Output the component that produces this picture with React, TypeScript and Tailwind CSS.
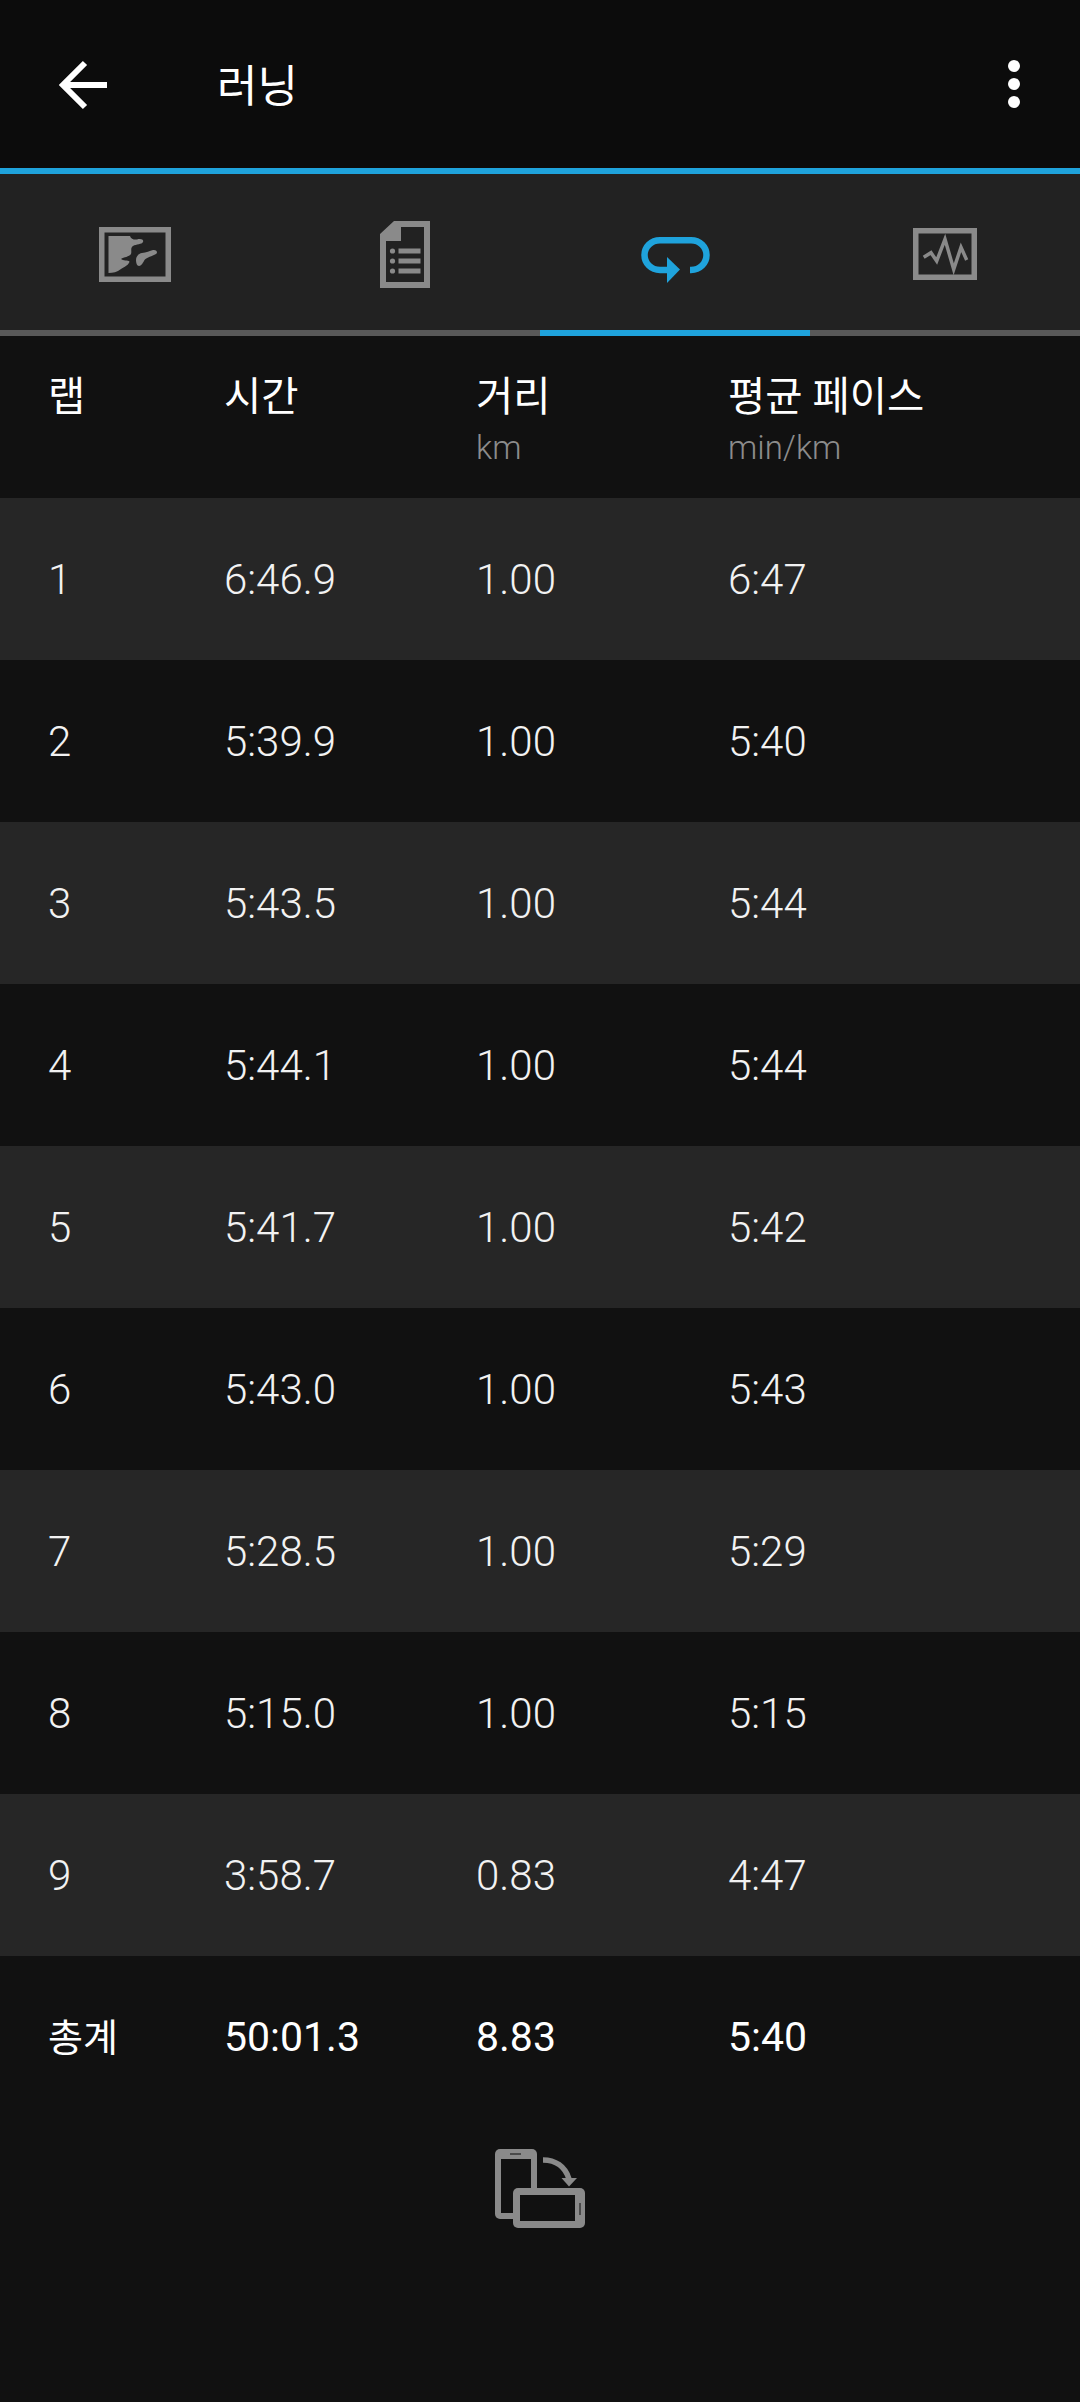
import React from "react";

const laps = [
  ["1", "6:46.9", "1.00", "6:47"],
  ["2", "5:39.9", "1.00", "5:40"],
  ["3", "5:43.5", "1.00", "5:44"],
  ["4", "5:44.1", "1.00", "5:44"],
  ["5", "5:41.7", "1.00", "5:42"],
  ["6", "5:43.0", "1.00", "5:43"],
  ["7", "5:28.5", "1.00", "5:29"],
  ["8", "5:15.0", "1.00", "5:15"],
  ["9", "3:58.7", "0.83", "4:47"],
];

const cols = "grid grid-cols-[176px_252px_252px_1fr] pl-12";

const MapIcon = () => (
  <svg width="72" height="55" viewBox="0 0 72 55" fill="none">
    <rect x="2.75" y="2.75" width="66.5" height="49.5" stroke="#8a8a8a" strokeWidth="5.5" />
    <path
      d="M9.5 9H31C32 12 35 13 38 12.5C42 11.5 45 12.5 44 15C43 17.5 37 17 34 19C31 21 33 24 32 27C30 30 25 30 22 32C24 34 29 33 30.5 34.5C30 38 25 40 22 42C18 45 14 46 9.5 46Z"
      fill="#8a8a8a"
    />
    <path
      d="M37 33C37 29 40 26.5 43 26C47 25.5 51 24 54 23C58 22.5 59 25.5 57 27C53 29.5 48 30 45.5 33C44 35.5 43 38.5 40 39C38 39 37 36 37 33Z"
      fill="#8a8a8a"
    />
  </svg>
);

const DetailsIcon = () => (
  <svg width="50" height="67" viewBox="0 0 50 67" fill="none">
    <path
      fillRule="evenodd"
      clipRule="evenodd"
      d="M14 0H50V67H0V13ZM21 6V20H6V61H44V6Z"
      fill="#8a8a8a"
    />
    <circle cx="12.5" cy="30" r="2.6" fill="#8a8a8a" />
    <circle cx="12.5" cy="40" r="2.6" fill="#8a8a8a" />
    <circle cx="12.5" cy="50" r="2.6" fill="#8a8a8a" />
    <rect x="18.5" y="27.5" width="22" height="5" fill="#8a8a8a" />
    <rect x="18.5" y="37.5" width="22" height="5" fill="#8a8a8a" />
    <rect x="18.5" y="47.5" width="22" height="5" fill="#8a8a8a" />
  </svg>
);

const LapIcon = () => (
  <svg width="69" height="46" viewBox="0 0 69 46" fill="none">
    <path
      d="M49 33H50C59 33 65.5 26 65.5 18C65.5 10 59 3.25 50 3.25H19C10 3.25 3.5 10 3.5 18C3.5 26 10 33 19 33H28"
      stroke="#1fa3dc"
      strokeWidth="6.5"
    />
    <path d="M26 20L39 32.5L26 46Z" fill="#1fa3dc" />
  </svg>
);

const ChartIcon = () => (
  <svg width="64" height="52" viewBox="0 0 64 52" fill="none">
    <rect x="2.75" y="2.75" width="58.5" height="46.5" stroke="#8a8a8a" strokeWidth="5.5" />
    <path
      d="M10.7 29.3L18 24.7L23.7 33L32 11.3L40.7 41.3L48 19.3L53.7 32"
      stroke="#8a8a8a"
      strokeWidth="3.5"
    />
  </svg>
);

const RotateIcon = () => (
  <svg width="90" height="79" viewBox="0 0 90 79" fill="none">
    <rect x="0" y="0" width="42" height="70" rx="5" fill="#8a8a8a" />
    <rect x="6" y="10" width="30" height="54" fill="#111111" />
    <path d="M15 5H26" stroke="#4a4a4a" strokeWidth="2" />
    <rect x="18" y="39" width="72" height="40" rx="5" fill="#8a8a8a" />
    <rect x="25" y="46" width="55" height="26" fill="#111111" />
    <path d="M85 54V66" stroke="#4a4a4a" strokeWidth="2" />
    <path d="M48 11C60 11 70 17 74 30" stroke="#8a8a8a" strokeWidth="5.5" />
    <path d="M66.5 29H82L74 37.5Z" fill="#8a8a8a" />
  </svg>
);

export default function App() {
  return (
    <div
      className="flex flex-col w-[1080px] h-[2402px] bg-[#111111] text-white overflow-hidden"
      style={{ fontFamily: 'Roboto, "Noto Sans CJK KR", sans-serif' }}
    >
      <div className="flex items-center justify-between h-[168px] bg-[#0c0c0c] pl-[59px] pr-[60px]">
        <div className="flex items-center pt-[2px]">
          <svg width="50" height="50" viewBox="0 0 50 50" fill="none">
            <path d="M48 25H4M26 3L4 25L26 47" stroke="#ffffff" strokeWidth="6" />
          </svg>
          <span className="ml-[108px] pt-[3px] text-[44px] leading-none">러닝</span>
        </div>
        <div className="flex flex-col gap-[6px]">
          <div className="w-3 h-3 rounded-full bg-white" />
          <div className="w-3 h-3 rounded-full bg-white" />
          <div className="w-3 h-3 rounded-full bg-white" />
        </div>
      </div>
      <div className="h-[6px] bg-[#1fa3dc]" />

      <div className="grid grid-cols-4 h-[162px] bg-[#222222]">
        <div className="flex flex-col border-b-[6px] border-[#595959]">
          <div className="flex flex-1 items-center justify-center pt-[5px]"><MapIcon /></div>
        </div>
        <div className="flex flex-col border-b-[6px] border-[#595959]">
          <div className="flex flex-1 items-center justify-center pt-[4px]"><DetailsIcon /></div>
        </div>
        <div className="flex flex-col border-b-[6px] border-[#1fa3dc]">
          <div className="flex flex-1 items-center justify-center pt-[16px]"><LapIcon /></div>
        </div>
        <div className="flex flex-col border-b-[6px] border-[#595959]">
          <div className="flex flex-1 items-center justify-center pt-[4px]"><ChartIcon /></div>
        </div>
      </div>

      <div className={`${cols} h-[162px] pt-[33px]`}>
        <div className="text-[40.5px] leading-[56px]">랩</div>
        <div className="text-[40.5px] leading-[56px]">시간</div>
        <div>
          <div className="text-[40.5px] leading-[56px]">거리</div>
          <div className="text-[33px] leading-[46px] font-light text-[#8c8c8c]">km</div>
        </div>
        <div>
          <div className="text-[40.5px] leading-[56px]">평균 페이스</div>
          <div className="text-[33px] leading-[46px] font-light text-[#8c8c8c]">min/km</div>
        </div>
      </div>

      {laps.map((lap, i) => (
        <div
          key={lap[0]}
          className={`${cols} items-center h-[162px] text-[42px] font-light text-[#f2f2f2] ${
            i % 2 === 0 ? "bg-[#262626]" : "bg-[#111111]"
          }`}
        >
          {lap.map((v, j) => (
            <div key={j}>{v}</div>
          ))}
        </div>
      ))}

      <div className={`${cols} items-center h-[162px] text-[41px] pt-[2px]`}>
        <div className="text-[38px]">총계</div>
        <div>50:01.3</div>
        <div>8.83</div>
        <div>5:40</div>
      </div>

      <div className="flex justify-center pt-[31px]">
        <RotateIcon />
      </div>
    </div>
  );
}
